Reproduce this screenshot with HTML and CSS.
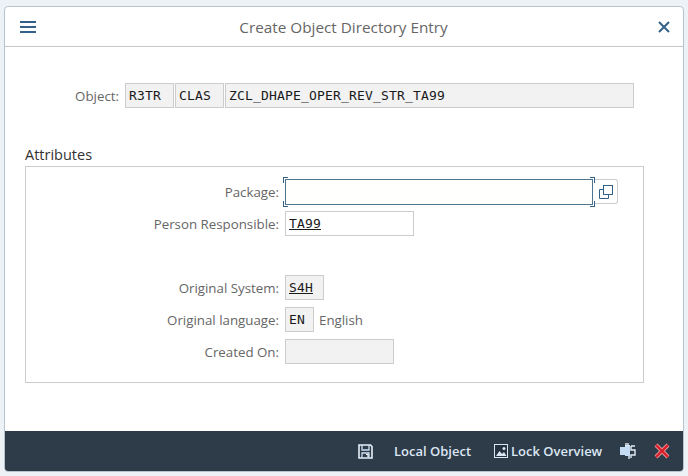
FILE: index.html
```html
<!DOCTYPE html>
<html lang="en">
<head>
<meta charset="utf-8">
<title>Create Object Directory Entry</title>
<link rel="stylesheet" href="styles.css">
</head>
<body>
<div class="dialog">
  <header class="head">
    <svg class="menu" width="16" height="12" viewBox="0 0 16 12"><path d="M0 1h16M0 6h16M0 11h16" stroke="#346187" stroke-width="2"/></svg>
    <h1 class="title">Create Object Directory Entry</h1>
    <svg class="close" width="12" height="12" viewBox="0 0 12 12"><path d="M1 1l10 10M11 1L1 11" stroke="#346187" stroke-width="2"/></svg>
  </header>
  <main class="body">
    <div class="object">
      <span class="label obj-label">Object:</span>
      <span class="field ro w49">R3TR</span>
      <span class="field ro w49">CLAS</span>
      <span class="field ro w409">ZCL_DHAPE_OPER_REV_STR_TA99</span>
    </div>
    <h2 class="group-title">Attributes</h2>
    <section class="group">
      <div class="row pkg">
        <span class="label">Package:</span>
        <span class="field focus">
          <i class="bracket tl"></i><i class="bracket bl"></i><i class="bracket tr"></i><i class="bracket br"></i>
        </span>
        <button class="help" type="button" aria-label="Value help">
          <svg width="16" height="16" viewBox="0 0 16 16" fill="none" stroke="#346187" stroke-width="1"><path d="M5.500 5.500H1.500V14.500H10.500V10.500"/><rect x="5.500" y="1.500" width="9" height="9"/></svg>
        </button>
      </div>
      <div class="row">
        <span class="label">Person Responsible:</span>
        <span class="field edit w129"><u>TA99</u></span>
      </div>
      <div class="row"></div>
      <div class="row">
        <span class="label">Original System:</span>
        <span class="field ro w39"><u>S4H</u></span>
      </div>
      <div class="row">
        <span class="label">Original language:</span>
        <span class="field ro w29">EN</span>
        <span class="desc">English</span>
      </div>
      <div class="row">
        <span class="label">Created On:</span>
        <span class="field ro w109"></span>
      </div>
    </section>
  </main>
  <footer class="foot">
    <svg class="save" width="15" height="15" viewBox="0 0 15 15" fill="none"><path d="M1 1h11.500L14 2.500V14H1z" stroke="#e6f1fb" stroke-width="1.600"/><path d="M4 1v5h7V1M4 14V9h7v5" stroke="#cfe2f5" stroke-width="1.300"/><path d="M8 10.500h2V13" stroke="#fff" stroke-width="1.200"/></svg>
    <span class="btn local">Local Object</span>
    <svg class="pic" width="14" height="14" viewBox="0 0 14 14"><rect x="0.500" y="0.500" width="13" height="13" fill="#26323f" stroke="#dbe7f3"/><path d="M2 12l3.500-5 2.500 3 2-2 2.500 4z" fill="#dbe7f3"/><circle cx="10" cy="4.500" r="1.500" fill="#dbe7f3"/></svg>
    <span class="btn lock">Lock Overview</span>
    <svg class="tool" width="16" height="16" viewBox="0 0 16 16"><path d="M0 4h5v8H0zM5 2h5v11H5z" fill="#c4dcf3"/><path d="M6 0v3M8 0v3M9 13v3M11 3h4M11 3v4h4v5h-4v3" fill="none" stroke="#e4eef8" stroke-width="1.400"/></svg>
    <svg class="cancel" width="16" height="16" viewBox="0 0 16 16"><path d="M2 2l12 12M14 2L2 14" stroke="#f4b6b6" stroke-width="4"/><path d="M2 2l12 12M14 2L2 14" stroke="#d9232e" stroke-width="2.600"/></svg>
  </footer>
</div>
</body>
</html>
```
FILE: styles.css
```css
* { box-sizing: border-box; }
html, body { margin: 0; height: 100%; }
body {
  background: #edf2f7;
  padding: 6px 4px 4px 4px;
  font-family: "Open Sans", "Noto Sans", sans-serif;
  font-size: 13.300px;
  color: #666;
  overflow: hidden;
}
.dialog {
  width: 680px;
  height: 466px;
  background: #fff;
  border: 1px solid #b9c3cc;
  border-radius: 4px;
  display: flex;
  flex-direction: column;
  overflow: hidden;
}
.head {
  height: 40px;
  flex: none;
  border-bottom: 1px solid #c4c8cc;
  display: flex;
  align-items: center;
  padding: 0 13px 0 15px;
}
.menu, .close { flex: none; }
.title {
  flex: 1;
  margin: 0;
  font-size: 15.300px;
  font-weight: 400;
  color: #666;
  text-align: center;
  padding-right: 7px;
}
.body { flex: 1; padding: 36px 0 0 20px; }
.label { text-align: right; color: #666; }
.field {
  height: 25px;
  display: block;
  border: 1px solid #ccc;
  font-family: "DejaVu Sans Mono", monospace;
  font-size: 13px;
  letter-spacing: 0.17px;
  line-height: 23px;
  padding: 0 3px;
  color: #1a1a1a;
  flex: none;
}
.ro { background: #f2f2f2; }
.edit { background: #fff; }
.object { display: flex; align-items: center; gap: 1px; }
.obj-label { width: 94px; margin-right: 5px; }
.w29 { width: 29px; }
.w39 { width: 39px; }
.w49 { width: 49px; }
.w109 { width: 109px; }
.w129 { width: 129px; }
.w409 { width: 409px; }
.group-title {
  margin: 37px 0 0 0;
  font-size: 14.500px;
  font-weight: 400;
  color: #333;
  line-height: 20px;
  height: 21px;
  font-family: "Open Sans", sans-serif;
}
.group {
  width: 619px;
  height: 217px;
  border: 1px solid #ccc;
  padding: 12px 0 0 0;
  display: flex;
  flex-direction: column;
  gap: 7px;
}
.row { display: flex; align-items: center; height: 25px; }
.row .label { width: 253px; margin-right: 6px; flex: none; }
.focus {
  width: 308px;
  height: 26px;
  background: #fffffd;
  border-color: #4f7490;
  position: relative;
}
.bracket {
  position: absolute;
  width: 5px;
  height: 6px;
  border: 0 solid #346187;
}
.tl { left: -3px; top: -3px; border-width: 1px 0 0 1px; }
.bl { left: -3px; bottom: -3px; border-width: 0 0 1px 1px; }
.tr { right: -3px; top: -3px; border-width: 1px 1px 0 0; }
.br { right: -3px; bottom: -3px; border-width: 0 1px 1px 0; }
.help {
  width: 23px;
  height: 25px;
  margin-left: 2px;
  padding: 0;
  border: 1px solid #ccc;
  border-left: 0;
  border-radius: 0 3px 3px 0;
  background: #fff;
  display: flex;
  align-items: center;
  justify-content: center;
}
.desc { margin-left: 5px; color: #666; }
.foot {
  height: 40px;
  flex: none;
  background: #2e3b49;
  display: flex;
  align-items: center;
  padding-left: 353px;
  color: #dbe7f3;
}
.foot svg { flex: none; }
.btn { font-size: 13px; font-weight: 600; white-space: nowrap; }
.local { margin-left: 21px; width: 100px; }
.lock { margin-left: 3px; width: 92px; }
.tool { margin-left: 17px; }
.cancel { margin-left: 18px; }
```
